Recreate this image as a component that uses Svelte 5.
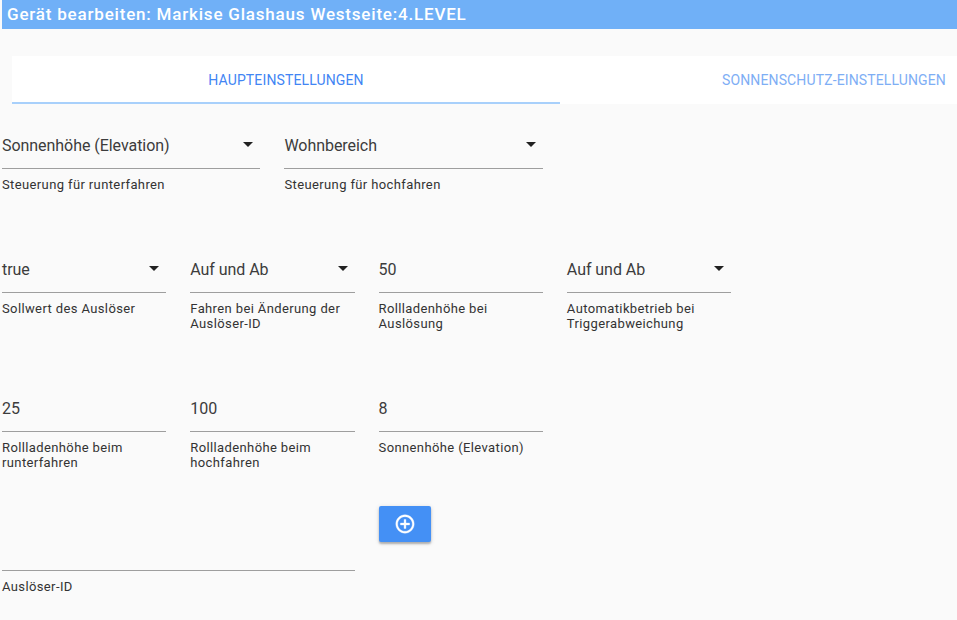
<script>
  const tabs = [
    { label: 'HAUPTEINSTELLUNGEN', active: true },
    { label: 'SONNENSCHUTZ-EINSTELLUNGEN', active: false }
  ];
</script>

{#snippet field(value, help, select, span)}
  <div class="field span{span}">
    <div class="control">
      <span class="value">{value}</span>
      {#if select}
        <span class="caret"></span>
      {/if}
    </div>
    <div class="help">{help}</div>
  </div>
{/snippet}

<main class="page">
  <header class="title">Gerät bearbeiten: Markise Glashaus Westseite:4.LEVEL</header>

  <nav class="tabs">
    {#each tabs as tab}
      <div class="tab" class:active={tab.active}>{tab.label}</div>
    {/each}
  </nav>

  <section class="form">
    <div class="row first">
      {@render field('Sonnenhöhe (Elevation)', 'Steuerung für runterfahren', true, 3)}
      {@render field('Wohnbereich', 'Steuerung für hochfahren', true, 3)}
    </div>

    <div class="row second">
      {@render field('true', 'Sollwert des Auslöser', true, 2)}
      {@render field('Auf und Ab', 'Fahren bei Änderung der Auslöser-ID', true, 2)}
      {@render field('50', 'Rollladenhöhe bei Auslösung', false, 2)}
      {@render field('Auf und Ab', 'Automatikbetrieb bei Triggerabweichung', true, 2)}
    </div>

    <div class="row third">
      {@render field('25', 'Rollladenhöhe beim runterfahren', false, 2)}
      {@render field('100', 'Rollladenhöhe beim hochfahren', false, 2)}
      {@render field('8', 'Sonnenhöhe (Elevation)', false, 2)}
    </div>

    <div class="row fourth">
      {@render field('', 'Auslöser-ID', false, 4)}
      <div class="action">
        <button class="add" aria-label="Hinzufügen">
          <svg viewBox="0 0 24 24" width="22" height="22">
            <path fill="#fff" stroke="#fff" stroke-width="0.4" d="M13 7h-2v4H7v2h4v4h2v-4h4v-2h-4V7zm-1-5C6.48 2 2 6.48 2 12s4.48 10 10 10 10-4.48 10-10S17.52 2 12 2zm0 18c-4.41 0-8-3.59-8-8s3.59-8 8-8 8 3.59 8 8-3.59 8-8 8z"/>
          </svg>
        </button>
      </div>
    </div>
  </section>
</main>

<style>
  :global(body) {
    margin: 0;
    background: #fafafa;
    font-family: Roboto, "Liberation Sans", sans-serif;
  }

  .page {
    width: 957px;
    height: 620px;
    overflow: hidden;
    background: #fafafa;
  }

  .title {
    margin-left: 2px;
    height: 29px;
    padding-left: 5px;
    line-height: 29px;
    background: #70b0f7;
    color: #fff;
    font-size: 17px;
    font-weight: 500;
    letter-spacing: 0.8px;
    white-space: nowrap;
  }

  .tabs {
    display: flex;
    margin: 27px 0 0 12px;
    height: 48px;
  }

  .tab {
    flex: 0 0 548px;
    box-sizing: border-box;
    height: 48px;
    line-height: 48px;
    text-align: center;
    background: #fff;
    color: #7eaef5;
    font-size: 14px;
    letter-spacing: 0.13px;
  }

  .tab.active {
    color: #4285f4;
    border-bottom: 2px solid #a8d0fb;
  }

  .form {
    padding: 0 0 0 2px;
  }

  .row {
    display: grid;
    grid-template-columns: repeat(8, 70.15px);
    column-gap: 24px;
  }

  .first {
    margin-top: 24px;
    height: 124px;
  }

  .second {
    height: 139px;
  }

  .third {
    height: 115px;
  }

  .fourth .field {
    padding-top: 24px;
  }

  .span2 {
    grid-column: span 2;
  }

  .span3 {
    grid-column: span 3;
  }

  .span4 {
    grid-column: span 4;
  }

  .control {
    box-sizing: border-box;
    display: flex;
    align-items: center;
    justify-content: space-between;
    height: 41px;
    padding: 0 7px 6px 0;
    border-bottom: 1px solid #9e9e9e;
    color: #3c3c3c;
    font-size: 16px;
    letter-spacing: -0.05px;
  }

  .value {
    min-height: 19px;
  }

  .caret {
    width: 0;
    height: 0;
    margin-bottom: 1px;
    border-left: 5.5px solid transparent;
    border-right: 5.5px solid transparent;
    border-top: 5.5px solid #212121;
  }

  .help {
    margin-top: 8px;
    color: #333;
    font-size: 13px;
    letter-spacing: 0.38px;
    line-height: 15px;
  }

  .action {
    grid-column: span 2;
  }

  .add {
    display: flex;
    align-items: center;
    justify-content: center;
    width: 52px;
    height: 36px;
    padding: 0;
    border: 0;
    border-radius: 2px;
    background: #4490f5;
    box-shadow: 0 2px 2px rgba(0, 0, 0, 0.24), 0 1px 5px rgba(0, 0, 0, 0.14);
  }
</style>
